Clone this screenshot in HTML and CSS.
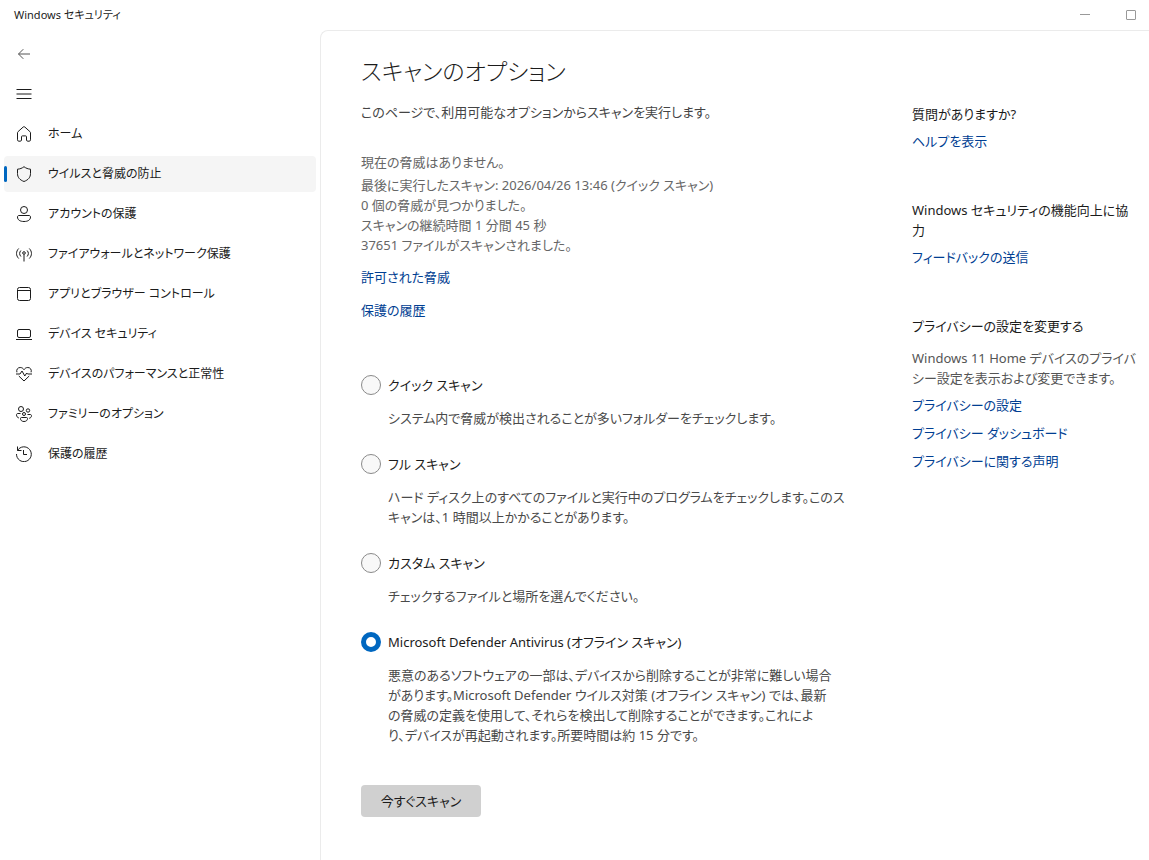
FILE: index.html
```
<!DOCTYPE html>
<html lang="ja">
<head>
    <meta charset="UTF-8" />
    <meta name="viewport" content="width=device-width, initial-scale=1" />
    <title>Windows セキュリティ</title>
    <link rel="stylesheet" href="styles.css">
</head>
<body>
    <header class="titlebar">
        <span class="window-title">Windows セキュリティ</span>
        <div class="window-controls">
            <button type="button" aria-label="最小化">
                <svg width="10" height="10" viewBox="0 0 10 10"><path d="M0 4.5h10" /></svg>
            </button>
            <button type="button" aria-label="最大化">
                <svg width="10" height="10" viewBox="0 0 10 10"><rect x=".5" y=".5" width="9" height="9" rx=".5" /></svg>
            </button>
        </div>
    </header>

    <div class="layout">
        <nav class="sidebar">
            <button type="button" class="nav-item" aria-label="戻る">
                <svg class="icon back" viewBox="0 0 16 16"><path d="M14 8H2.5M7.3 3.2L2.5 8l4.8 4.8" /></svg>
            </button>
            <button type="button" class="nav-item" aria-label="メニュー">
                <svg class="icon" viewBox="0 0 16 16"><path d="M.5 3.5h15M.5 8h15M.5 12.5h15" /></svg>
            </button>
            <a href="#" class="nav-item">
                <svg class="icon" viewBox="0 0 16 16"><path d="M1.5 6.8c0-.5.2-.9.6-1.2L7.2 1c.5-.4 1.1-.4 1.6 0l5.1 4.6c.4.3.6.7.6 1.2v7c0 .9-.5 1.4-1.3 1.4h-1.4c-.8 0-1.3-.5-1.3-1.2v-3.3c0-.5-.3-.8-.8-.8H6.3c-.5 0-.8.3-.8.8V14c0 .7-.5 1.2-1.3 1.2H2.8c-.8 0-1.3-.5-1.3-1.4z" /></svg>
                <span>ホーム</span>
            </a>
            <a href="#" class="nav-item active" aria-current="page">
                <svg class="icon" viewBox="0 0 16 16"><path d="M8 .7c1.9 1.5 4 2.3 6.5 2.5v4.3c0 3.9-2.2 6.4-6.5 8-4.3-1.6-6.5-4.1-6.5-8V3.2C4 3 6.1 2.2 8 .7z" /></svg>
                <span>ウイルスと脅威の防止</span>
            </a>
            <a href="#" class="nav-item">
                <svg class="icon" viewBox="0 0 16 16"><circle cx="8" cy="4" r="3.5" /><path d="M3 9.5h10c.9 0 1.5.6 1.5 1.5 0 2.9-2.5 4.5-6.5 4.5S1.5 13.9 1.5 11c0-.9.6-1.5 1.5-1.5z" /></svg>
                <span>アカウントの保護</span>
            </a>
            <a href="#" class="nav-item">
                <svg class="icon" viewBox="0 0 16 16"><path d="M2.7 2.5c-2.9 3-2.9 7 0 10M13.3 2.5c2.9 3 2.9 7 0 10M4.9 4.5c-1.7 1.8-1.7 4.2 0 6M11.1 4.5c1.7 1.8 1.7 4.2 0 6M8 8.5v7" /><circle cx="8" cy="7" r="1.3" /></svg>
                <span>ファイアウォールとネットワーク保護</span>
            </a>
            <a href="#" class="nav-item">
                <svg class="icon" viewBox="0 0 16 16"><rect x="1.5" y="1.5" width="13" height="13" rx="2" /><path d="M1.5 4.5h13" /></svg>
                <span>アプリとブラウザー コントロール</span>
            </a>
            <a href="#" class="nav-item">
                <svg class="icon" viewBox="0 0 16 16"><rect x="1.5" y="3.5" width="13" height="8" rx="1.5" /><path d="M0 13.5h16" /></svg>
                <span>デバイス セキュリティ</span>
            </a>
            <a href="#" class="nav-item">
                <svg class="icon" viewBox="0 0 16 16"><path d="M.9 6.3C.1 3.5 1.8 1.5 4.2 1.5c1.7 0 2.9.8 3.8 2.2.9-1.4 2.1-2.2 3.8-2.2 2.4 0 4.1 2 3.3 4.8M2.8 10L8 15l5.2-5M0 8h4l2-3 2.8 5 1.9-3 .9 1H16" /></svg>
                <span>デバイスのパフォーマンスと正常性</span>
            </a>
            <a href="#" class="nav-item">
                <svg class="icon" viewBox="0 0 16 16"><circle cx="5" cy="3" r="2.5" /><circle cx="12" cy="4.5" r="1.7" /><circle cx="8" cy="8" r="1.5" /><path d="M4.5 7.5H2c-1 0-1.5.5-1.5 1.3 0 1.6.8 2.7 2.4 3.2M11.5 8.5H14c1 0 1.5.4 1.5 1.2 0 1.3-.8 2.2-2.3 2.6M5.5 11.5h5c.6 0 1 .4 1 1 0 1.8-1.3 3-3.5 3s-3.5-1.2-3.5-3c0-.6.4-1 1-1z" /></svg>
                <span>ファミリーのオプション</span>
            </a>
            <a href="#" class="nav-item">
                <svg class="icon" viewBox="0 0 16 16"><path d="M1.5.5v4h4M1.5 4.5a7.4 7.4 0 1 1-1 3.5M7.5 4v4.500h3.500" /></svg>
                <span>保護の履歴</span>
            </a>
        </nav>

        <main class="page">
            <section class="content">
                <h1>スキャンのオプション</h1>
                <p class="intro">このページで、利用可能なオプションからスキャンを実行します。</p>

                <div class="status">
                    <p class="status-title">現在の脅威はありません。</p>
                    <p>最後に実行したスキャン: 2026/04/26 13:46 (クイック スキャン)</p>
                    <p>0 個の脅威が見つかりました。</p>
                    <p>スキャンの継続時間 1 分間 45 秒</p>
                    <p>37651 ファイルがスキャンされました。</p>
                </div>
                <div class="status-links">
                    <a href="#">許可された脅威</a>
                    <a href="#">保護の履歴</a>
                </div>

                <form class="scan-form">
                    <div class="option">
                        <input type="radio" name="scan" id="quick">
                        <label for="quick">クイック スキャン</label>
                        <p>システム内で脅威が検出されることが多いフォルダーをチェックします。</p>
                    </div>
                    <div class="option">
                        <input type="radio" name="scan" id="full">
                        <label for="full">フル スキャン</label>
                        <p>ハード ディスク上のすべてのファイルと実行中のプログラムをチェックします。このス<br>キャンは、1 時間以上かかることがあります。</p>
                    </div>
                    <div class="option">
                        <input type="radio" name="scan" id="custom">
                        <label for="custom">カスタム スキャン</label>
                        <p>チェックするファイルと場所を選んでください。</p>
                    </div>
                    <div class="option">
                        <input type="radio" name="scan" id="offline" checked>
                        <label for="offline">Microsoft Defender Antivirus (オフライン スキャン)</label>
                        <p>悪意のあるソフトウェアの一部は、デバイスから削除することが非常に難しい場合<br>があります。Microsoft Defender ウイルス対策 (オフライン スキャン) では、最新<br>の脅威の定義を使用して、それらを検出して削除することができます。これによ<br>り、デバイスが再起動されます。所要時間は約 15 分です。</p>
                    </div>
                    <button type="button" class="scan-button">今すぐスキャン</button>
                </form>
            </section>

            <aside class="help">
                <section>
                    <h2>質問がありますか?</h2>
                    <a href="#">ヘルプを表示</a>
                </section>
                <section>
                    <h2>Windows セキュリティの機能向上に協<br>力</h2>
                    <a href="#">フィードバックの送信</a>
                </section>
                <section>
                    <h2>プライバシーの設定を変更する</h2>
                    <p>Windows 11 Home デバイスのプライバ<br>シー設定を表示および変更できます。</p>
                    <div class="link-list">
                        <a href="#">プライバシーの設定</a>
                        <a href="#">プライバシー ダッシュボード</a>
                        <a href="#">プライバシーに関する声明</a>
                    </div>
                </section>
            </aside>
        </main>
    </div>
</body>
</html>
```
FILE: styles.css
```
* {
    box-sizing: border-box;
}
body {
    margin: 0;
    min-height: 100vh;
    display: flex;
    flex-direction: column;
    background-color: #fff;
    color: #1b1b1b;
    font-family: "Noto Sans", "Noto Sans CJK JP", sans-serif;
    font-size: 13px;
    line-height: 20px;
    font-kerning: normal;
    font-feature-settings: "palt";
}
h1, h2, p {
    margin: 0;
    font-weight: inherit;
}
a {
    color: #003e92;
    text-decoration: none;
}
button {
    font: inherit;
    font-feature-settings: inherit;
    color: inherit;
    border: none;
    background: none;
    padding: 0;
}
svg {
    fill: none;
    stroke: currentColor;
}

/* Title bar */
.titlebar {
    display: flex;
    justify-content: space-between;
    align-items: center;
    height: 30px;
    padding-left: 14px;
}
.window-title {
    font-size: 11px;
}
.window-controls {
    display: flex;
    gap: 10px;
    color: #999;
}
.window-controls button {
    display: flex;
    align-items: center;
    justify-content: center;
    width: 36px;
    height: 28px;
}

/* Sidebar */
.layout {
    flex: 1;
    display: grid;
    grid-template-columns: 320px minmax(0, 1fr);
}
.sidebar {
    display: flex;
    flex-direction: column;
    gap: 4px;
    padding: 6px 4px;
    font-size: 12px;
}
.nav-item {
    display: flex;
    align-items: center;
    gap: 16px;
    height: 36px;
    padding-left: 12px;
    border-radius: 4px;
    color: #1b1b1b;
    white-space: nowrap;
}
.nav-item.active {
    position: relative;
    background-color: #f5f5f5;
}
.nav-item.active::before {
    content: "";
    position: absolute;
    left: 0;
    top: 10px;
    width: 3px;
    height: 16px;
    border-radius: 2px;
    background-color: #0067c0;
}
.icon {
    flex: none;
    width: 16px;
    height: 16px;
}
.icon.back {
    color: #555;
}

/* Page */
.page {
    display: grid;
    grid-template-columns: minmax(0, 1fr) 237px;
    gap: 56px;
    padding: 22px 0 40px 40px;
    border: 1px solid #ebebeb;
    border-width: 1px 0 0 1px;
    border-top-left-radius: 8px;
}
h1 {
    font-size: 23px;
    font-weight: 300;
    line-height: 36px;
}
.intro {
    margin-top: 13px;
    color: #444;
}
.status {
    margin-top: 30px;
    color: #666;
}
.status-title {
    margin-bottom: 3px;
}
.status-links {
    display: flex;
    flex-direction: column;
    align-items: flex-start;
    gap: 13px;
    margin-top: 12px;
}

/* Scan options */
.scan-form {
    margin-top: 55px;
}
.option {
    display: grid;
    grid-template-columns: 20px 1fr;
    column-gap: 7px;
    row-gap: 13px;
    margin-bottom: 26px;
    white-space: nowrap;
}
.option input {
    appearance: none;
    width: 20px;
    height: 20px;
    margin: 0;
    border: 1px solid #8a8a8a;
    border-radius: 50%;
    background-color: #f8f8f8;
}
.option input:checked {
    border: 5px solid #0067c0;
    background-color: #fff;
}
.option p {
    grid-column: 2;
    color: #4a4a4a;
}
.scan-button {
    min-width: 120px;
    height: 32px;
    margin-top: 14px;
    border-radius: 4px;
    background-color: #d0d0d0;
}

/* Help column */
.help {
    display: flex;
    flex-direction: column;
    gap: 49px;
    padding-top: 51px;
    white-space: nowrap;
}
.help section {
    display: flex;
    flex-direction: column;
    align-items: flex-start;
    gap: 7px;
}
.help h2 {
    font-size: 13px;
}
.help p {
    margin-top: 5px;
    color: #555;
}
.link-list {
    display: flex;
    flex-direction: column;
    align-items: flex-start;
    gap: 8px;
}
```
